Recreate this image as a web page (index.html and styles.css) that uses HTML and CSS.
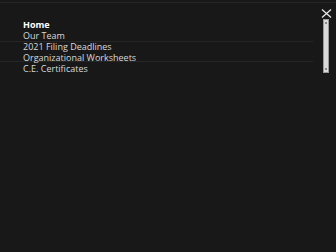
FILE: index.html
```html
<!DOCTYPE html>
<html lang="en">

<head>
    <meta charset="UTF-8">
    <meta name="viewport" content="width=device-width, initial-scale=1.0">
    <title>Menu</title>
    <link rel="stylesheet" href="styles.css">
</head>

<body>
    <div class="topbar"></div>
    <div class="menu">
        <ul class="nav">
            <li class="nav-item active">Home</li>
            <li class="nav-item">Our Team</li>
            <li class="nav-item split-top">2021 Filing Deadlines</li>
            <li class="nav-item split-bottom">Organizational Worksheets</li>
            <li class="nav-item">C.E. Certificates</li>
        </ul>
    </div>
    <svg class="closeBtn" width="11" height="9" viewBox="0 0 11 9">
        <path d="M1 0.5 L10 8.5 M10 0.5 L1 8.5" stroke="#e6e6e6" stroke-width="1.3" fill="none" />
    </svg>
    <div class="scroll">
        <span class="dot top"></span>
        <span class="dot bottom"></span>
    </div>
</body>

</html>
```

FILE: styles.css
```css
* {
    margin: 0;
    padding: 0;
    box-sizing: border-box;
}

body {
    width: 100%;
    height: 100vh;
    background-color: #181818;
    font-family: "Open Sans", Arial, sans-serif;
    overflow: hidden;
}

.topbar {
    height: 3px;
    border-bottom: 1px solid #262626;
}

.menu {
    padding-top: 16px;
    width: 313px;
}

.nav {
    list-style: none;
}

.nav-item {
    padding-left: 23px;
    font-size: 9px;
    line-height: 11px;
    height: 11px;
    color: #d8d8d8;
    background-repeat: no-repeat;
    background-size: 100% 1px;
}

.active {
    color: #fff;
    font-weight: 700;
}

/* thin rules between some rows */
.split-top {
    background-image: linear-gradient(#262626, #262626);
    background-position: 0 0;
}

.split-bottom {
    background-image: linear-gradient(#262626, #262626);
    background-position: 0 9px;
}

.closeBtn {
    position: absolute;
    right: 4px;
    top: 9px;
}

.scroll {
    position: absolute;
    right: 7px;
    top: 19px;
    width: 6px;
    height: 54px;
    background-color: #d9d9d9;
    border: 1px solid #9a9a9a;
}

.dot {
    position: absolute;
    left: 1px;
    width: 2px;
    height: 2px;
    background-color: #8a8a8a;
}

.dot.top {
    top: 2px;
}

.dot.bottom {
    bottom: 2px;
}
```
